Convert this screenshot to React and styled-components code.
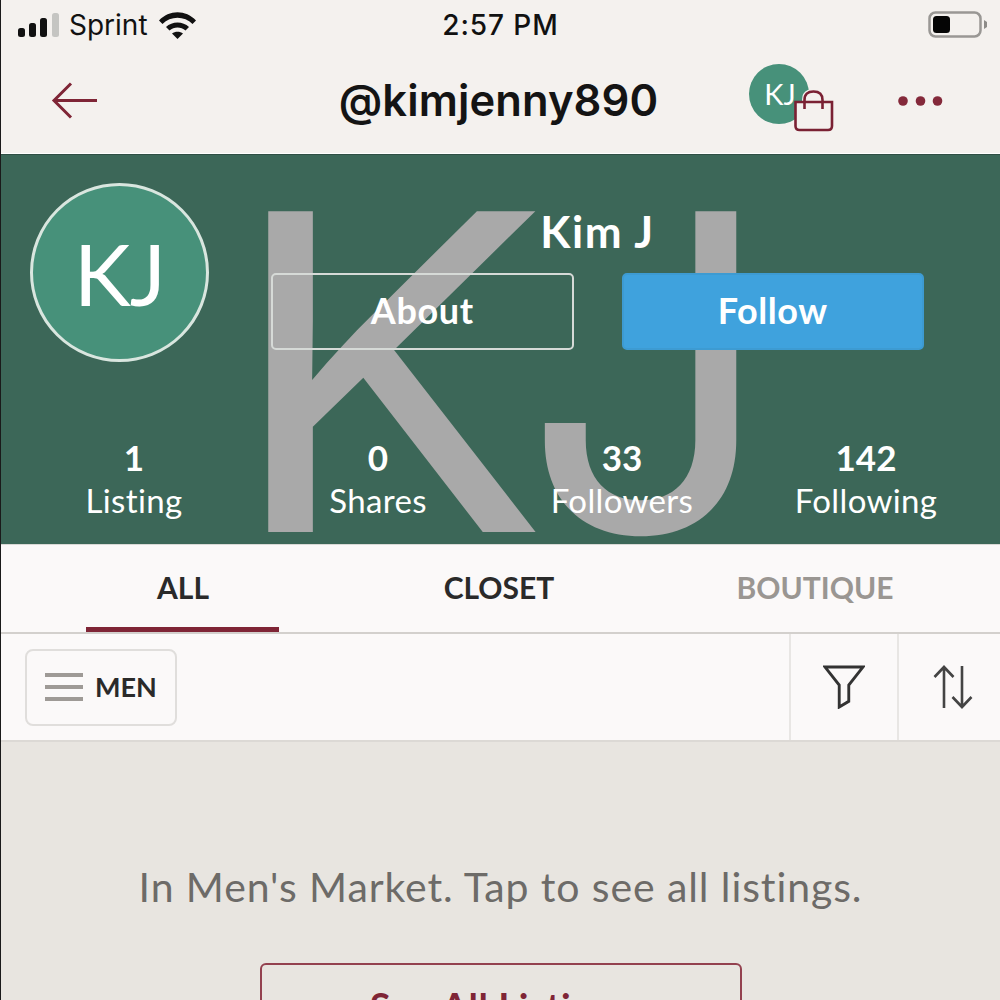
import React from "react";
import styled, { createGlobalStyle } from "styled-components";

const Global = createGlobalStyle`
  html, body { margin: 0; padding: 0; background: #e9e6e1; }
  * { box-sizing: border-box; }
`;
const sans = `Lato, "Open Sans", "Liberation Sans", sans-serif`;
const maroon = "#7f2536";

const Page = styled.div`
  width: 1000px; height: 1000px; overflow: hidden; display: flex; flex-direction: column;
  border-left: 1px solid #1a1a1a; font-family: ${sans}; background: #e9e6e1;
`;
const Top = styled.header`
  height: 155px; background: #f4f1ee; display: flex; flex-direction: column;
  border-bottom: 1px solid #2f4f44; flex: none; box-shadow: inset 0 -1px 0 #fff;
`;
const StatusBar = styled.div`
  height: 50px; display: grid; grid-template-columns: 1fr auto 1fr; align-items: center; padding: 0 12px 0 16px;
  font-family: Inter, Roboto, sans-serif; color: #111;
`;
const StatusLeft = styled.div`display: flex; align-items: center; gap: 9px;`;
const Carrier = styled.span`font-weight: 400; font-size: 28px; letter-spacing: 0; margin-right: 2px;`;
const Clock = styled.span`font-weight: 500; font-size: 28px; letter-spacing: .9px; margin-left: -4px;`;
const StatusRight = styled.div`display: flex; justify-content: flex-end; margin-top: -1px;`;
const Nav = styled.div`
  flex: 1; display: grid; grid-template-columns: 1fr auto 1fr; align-items: center; padding: 0 56px 0 50px; margin-top: -3px;
`;
const NavTitle = styled.div`
  text-align: center; font-family: Inter, Lato, sans-serif; font-size: 43.5px; font-weight: 600; color: #141414;
  letter-spacing: .1px; margin: -2px 0 0 2px;
`;
const NavRight = styled.div`display: flex; align-items: center; justify-content: flex-end; margin-top: 1px;`;
const CartWrap = styled.div`
  position: relative; width: 86px; height: 72px; margin: -3px 63px 0 0; flex: none;
`;
const MiniAvatar = styled.div`
  width: 60px; height: 60px; border-radius: 50%; background: #47917a; color: #fff; display: flex;
  align-items: center; justify-content: center; font-size: 29px; font-weight: 400; padding-left: 2px;
`;
const BagIcon = styled.svg`position: absolute; left: 44px; top: 26px;`;

const Hero = styled.section`
  height: 389px; flex: none; background: #3c6758; position: relative; overflow: hidden; color: #fff;
  display: flex; flex-direction: column; padding: 28px 12px 0 29px;
`;
const Watermark = styled.div`
  position: absolute; left: 225px; top: -33px; font-family: Inter, Roboto, sans-serif;
  font-size: 441px; line-height: 500px; color: #a9a9a9; white-space: nowrap;
`;
const WatermarkK = styled.span`
  display: inline-block; transform: scaleX(1.09); transform-origin: left center; margin-right: 1px;
`;
const HeroTop = styled.div`display: flex; position: relative; align-items: flex-start;`;
const BigAvatar = styled.div`
  width: 179px; height: 179px; border-radius: 50%; background: #47917a; border: 3px solid #d9e6df; flex: none;
  display: flex; align-items: center; justify-content: center; font-size: 86px; font-weight: 400;
  font-family: ${sans}; letter-spacing: -1px;
`;
const HeroRight = styled.div`margin-left: 62px; width: 653px; display: flex; flex-direction: column;`;
const Name = styled.div`
  text-align: center; font-size: 44px; font-weight: 700; height: 90px; line-height: 44px; padding-top: 26px; letter-spacing: 1.6px;
`;
const Buttons = styled.div`display: grid; grid-template-columns: 1fr 1fr; gap: 48px;`;
const HeroButton = styled.div`
  height: 77px; border-radius: 5px; display: flex; align-items: center; justify-content: center;
  font-size: 36px; font-weight: 700; color: #fff; padding-bottom: 4px; letter-spacing: .6px;
  background: ${p => (p.$primary ? "#3fa2dd" : "transparent")};
  border: 2px solid ${p => (p.$primary ? "#3d9bd2" : "#d6dad7")};
`;
const Stats = styled.div`
  position: relative; display: grid; grid-template-columns: repeat(4, 1fr); margin-top: 73px; margin-left: -18px;
`;
const Stat = styled.div`display: flex; flex-direction: column; align-items: center;`;
const StatNum = styled.div`font-size: 35px; font-weight: 700; line-height: 44px;`;
const StatLabel = styled.div`font-size: 33px; font-weight: 400; line-height: 42px; letter-spacing: .35px;`;

const Tabs = styled.nav`
  height: 90px; flex: none; background: #fbf9f9; display: grid; grid-template-columns: repeat(3, 316px);
  padding: 0 24px; border-bottom: 2px solid #d3d0cd; border-top: 1px solid #d9d9d6;
`;
const Tab = styled.div`
  display: flex; justify-content: center; align-items: center; position: relative;
  font-size: 30px; font-weight: 700; color: ${p => (p.$muted ? "#9a9692" : "#2a2a2a")};
  padding-bottom: 3px;
`;
const TabMark = styled.span`
  position: absolute; bottom: 0; left: 61px; width: 193px; height: 5px; background: ${maroon};
`;
const Toolbar = styled.div`
  height: 108px; flex: none; background: #fbf9f9; display: flex; align-items: stretch;
  border-bottom: 2px solid #dcd9d5;
`;
const MenuArea = styled.div`flex: 1; display: flex; align-items: center; padding-left: 24px;`;
const MenuButton = styled.div`
  width: 152px; height: 77px; border: 2px solid #e0dedc; border-radius: 8px; display: flex; align-items: center;
  gap: 12px; padding: 0 0 2px 18px; font-size: 27px; font-weight: 700; color: #2a2a2a;
`;
const Burger = styled.span`display: flex; flex-direction: column; gap: 8px; margin-top: 2px;`;
const BurgerLine = styled.span`display: block; width: 38px; height: 4px; background: #9e9a96;`;
const ToolCell = styled.div`
  width: ${p => p.$w}px; display: flex; align-items: center; justify-content: center;
  border-left: 2px solid #e8e6e4; padding-left: ${p => p.$inset || 0}px;
`;
const Market = styled.main`
  flex: 1; background: #e8e5e0; display: flex; flex-direction: column; align-items: center; padding-top: 119px;
`;
const MarketText = styled.div`font-size: 41px; color: #6d6b68; font-weight: 400; line-height: 52px; letter-spacing: .9px;`;
const SeeAll = styled.div`
  margin-top: 50px; width: 482px; height: 90px; border: 2px solid #93414f; border-radius: 6px; flex: none;
  display: flex; justify-content: center; padding-top: 18px; color: ${maroon}; font-weight: 700; font-size: 38px;
  letter-spacing: .6px;
`;

export default function App() {
  return (
    <Page>
      <Global />
      <Top>
        <StatusBar>
          <StatusLeft>
            <svg width="43" height="26" viewBox="0 0 43 26">
              <rect x="1" y="16" width="7" height="9" rx="2.5" fill="#111" />
              <rect x="12" y="11" width="7" height="14" rx="2.5" fill="#111" />
              <rect x="23" y="6" width="7" height="19" rx="2.5" fill="#111" />
              <rect x="35" y="1" width="7" height="24" rx="2.5" fill="#c5c5c2" />
            </svg>
            <Carrier>Sprint</Carrier>
            <svg width="37" height="28" viewBox="0 0 37 28">
              <path d="M0 9.5 C10 -1.5 27 -1.5 37 9.5 L33.5 13 C25.5 4.5 11.5 4.5 3.5 13 Z" fill="#111" />
              <path d="M7 16 C13 10 24 10 30 16 L26.5 19.5 C22 15.5 15 15.5 10.5 19.5 Z" fill="#111" />
              <path d="M13 22.5 C16 20 21 20 24 22.5 L18.500 28 Z" fill="#111" />
            </svg>
          </StatusLeft>
          <Clock>2:57 PM</Clock>
          <StatusRight>
            <svg width="60" height="28" viewBox="0 0 60 28">
              <rect x="1.5" y="1.5" width="51" height="24" rx="6" fill="none" stroke="#999794" strokeWidth="2.5" />
              <rect x="5" y="5" width="17" height="17" rx="3.5" fill="#050505" />
              <path d="M56 9 L59 11 L59 16 L56 18 Z" fill="#8d8b88" />
            </svg>
          </StatusRight>
        </StatusBar>
        <Nav>
          <svg width="48" height="38" viewBox="0 0 48 38" fill="none" stroke={maroon} strokeWidth="3">
            <path d="M46 18.5 H3 M20 1.5 L3 18.5 L20 35.500" />
          </svg>
          <NavTitle>@kimjenny890</NavTitle>
          <NavRight>
            <CartWrap>
              <MiniAvatar>KJ</MiniAvatar>
              <BagIcon width="44" height="44" viewBox="0 0 44 44" fill="none" stroke="#7a2133" strokeWidth="2.6">
                <path d="M9 19 V10 Q9 -1 21 -1 Q33 -1 33 10 V12 H9 Z" fill="#f4f1ee" stroke="none" />
                <path d="M2.500 12 H39 V36 Q39 40 35 40 H6.500 Q2.500 40 2.500 36 Z" fill="#f4f1ee" />
                <path d="M11.500 19 V10 Q11.500 1.500 20.500 1.500 Q29.500 1.500 29.500 10 V19" />
              </BagIcon>
            </CartWrap>
            <svg width="46" height="12" viewBox="0 0 46 12" fill="#84293a">
              <circle cx="5" cy="6" r="4.8" /><circle cx="22.5" cy="6" r="4.8" /><circle cx="39.5" cy="6" r="4.8" />
            </svg>
          </NavRight>
        </Nav>
      </Top>
      <Hero>
        <Watermark><WatermarkK>K</WatermarkK>J</Watermark>
        <HeroTop>
          <BigAvatar>KJ</BigAvatar>
          <HeroRight>
            <Name>Kim J</Name>
            <Buttons>
              <HeroButton>About</HeroButton>
              <HeroButton $primary>Follow</HeroButton>
            </Buttons>
          </HeroRight>
        </HeroTop>
        <Stats>
          <Stat><StatNum>1</StatNum><StatLabel>Listing</StatLabel></Stat>
          <Stat><StatNum>0</StatNum><StatLabel>Shares</StatLabel></Stat>
          <Stat><StatNum>33</StatNum><StatLabel>Followers</StatLabel></Stat>
          <Stat><StatNum>142</StatNum><StatLabel>Following</StatLabel></Stat>
        </Stats>
      </Hero>
      <Tabs>
        <Tab>ALL<TabMark /></Tab>
        <Tab>CLOSET</Tab>
        <Tab $muted>BOUTIQUE</Tab>
      </Tabs>
      <Toolbar>
        <MenuArea>
          <MenuButton>
            <Burger><BurgerLine /><BurgerLine /><BurgerLine /></Burger>
            MEN
          </MenuButton>
        </MenuArea>
        <ToolCell $w={108}>
          <svg width="42" height="44" viewBox="0 0 44 46" fill="none" stroke="#333" strokeWidth="3">
            <path d="M2 2 H42 L27 21 V38 L17 44 V21 Z" />
          </svg>
        </ToolCell>
        <ToolCell $w={103} $inset={6}>
          <svg width="40" height="44" viewBox="0 0 40 44" fill="none" stroke="#444" strokeWidth="2.6">
            <path d="M11 43 V2 M1.500 12 L11 2 L20.500 12" />
            <path d="M29 1 V42 M19.500 32 L29 42 L38.500 32" />
          </svg>
        </ToolCell>
      </Toolbar>
      <Market>
        <MarketText>In Men's Market. Tap to see all listings.</MarketText>
        <SeeAll>See All Listings</SeeAll>
      </Market>
    </Page>
  );
}
